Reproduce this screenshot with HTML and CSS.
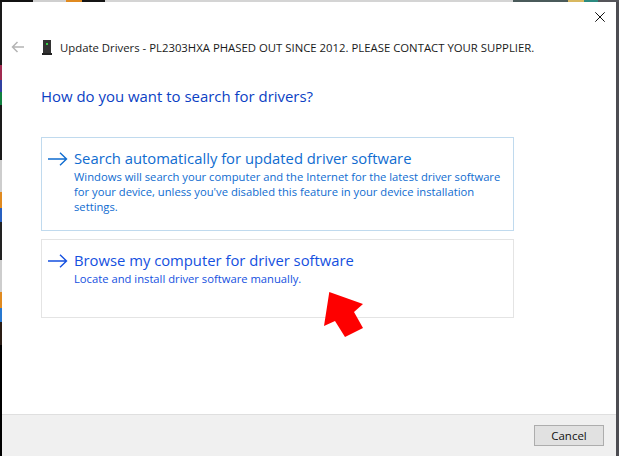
FILE: index.html
```html
<!DOCTYPE html>
<html lang="en">
<head>
<meta charset="utf-8">
<title>Update Drivers</title>
<link rel="stylesheet" href="styles.css">
</head>
<body>
<div class="desktop">
  <div class="window">
    <div class="titlebar">
      <button class="close" aria-label="Close">
        <svg width="10" height="10" viewBox="0 0 10 10"><path d="M.3.300l9.400 9.400M9.700.300l-9.400 9.400" fill="none" stroke="#111" stroke-width="1"/></svg>
      </button>
    </div>
    <div class="nav">
      <svg class="back" width="14" height="12" viewBox="0 0 14 12"><path d="M13 6H1.500M6.500 1L1.500 6l5 5" fill="none" stroke="#b4b4b4" stroke-width="1.500"/></svg>
      <svg class="device" width="10" height="15" viewBox="0 0 10 15"><path d="M1 0h8v13H1z" fill="#333"/><path d="M0 13h10v2H0z" fill="#222"/><path d="M4 3h2v2H4z" fill="#35d045"/></svg>
      <span class="nav-title">Update Drivers - PL2303HXA PHASED OUT SINCE 2012. PLEASE CONTACT YOUR SUPPLIER.</span>
    </div>
    <main class="content">
      <h1 class="heading">How do you want to search for drivers?</h1>
      <div class="option option-hover">
        <svg class="option-arrow" width="20" height="14" viewBox="0 0 20 14"><path d="M0 7h18.500M12 .8L18.500 7 12 13.200" fill="none" stroke="#0f6cd0" stroke-width="1.400"/></svg>
        <div class="option-text">
          <div class="option-title">Search automatically for updated driver software</div>
          <div class="option-desc">Windows will search your computer and the Internet for the latest driver software for your device, unless you've disabled this feature in your device installation settings.</div>
        </div>
      </div>
      <div class="option option-plain">
        <svg class="option-arrow" width="20" height="14" viewBox="0 0 20 14"><path d="M0 7h18.500M12 .8L18.500 7 12 13.200" fill="none" stroke="#1450e0" stroke-width="1.400"/></svg>
        <div class="option-text">
          <div class="option-title">Browse my computer for driver software</div>
          <div class="option-desc">Locate and install driver software manually.</div>
        </div>
      </div>
    </main>
    <footer class="footer">
      <button class="cancel">Cancel</button>
    </footer>
    <svg class="pointer" width="40" height="46" viewBox="0 0 40 46"><path d="M5.300 0L39 12l-9 8 9 16-18 9-10-16-11 5z" fill="#fe0000"/></svg>
  </div>
</div>
</body>
</html>
```
FILE: styles.css
```css
html, body {
  margin: 0;
  padding: 0;
  height: 100%;
}
body {
  overflow: hidden;
  font-family: "Open Sans", "Noto Sans", sans-serif;
}
.desktop {
  width: 619px;
  height: 456px;
  box-sizing: border-box;
  padding: 2px 3px 0 2px;
  display: flex;
  background:
    linear-gradient(90deg, #111 0 33px, #cfcfcf 33px 66px, #e08a20 66px 82px, #151515 82px 105px, #d4d4d4 105px 513px, #4a5a5a 513px 568px, #d8b860 568px 584px, #2c8a80 584px 598px, #55555a 598px) top left / 100% 2px no-repeat,
    linear-gradient(180deg, #1a1a1a 0 65px, #a02a50 65px 80px, #3040a0 80px 92px, #108040 92px 105px, #1a1a1a 105px 160px, #cdcdcd 160px 192px, #e08a20 192px 208px, #2860c0 208px 222px, #222 222px 260px, #cdcdcd 260px 292px, #e08a20 292px 308px, #2878d0 308px 322px, #2a1c14 322px 345px, #000 345px) top left / 2px 100% no-repeat,
    #4d4d52;
}
.window {
  position: relative;
  flex: 1;
  display: flex;
  flex-direction: column;
  background: #fff;
}
.titlebar {
  height: 30px;
  display: flex;
  justify-content: flex-end;
}
.close {
  width: 30px;
  height: 30px;
  margin: 0 1px 0 0;
  padding: 0;
  border: 0;
  background: none;
  display: flex;
  justify-content: center;
  align-items: center;
}
.nav {
  height: 30px;
  display: flex;
  align-items: center;
  padding-left: 9px;
}
.back {
  flex: none;
}
.device {
  flex: none;
  margin-left: 17px;
}
.nav-title {
  margin-left: 8px;
  font-size: 11.350px;
  color: #1a1a1a;
  white-space: nowrap;
}
.content {
  flex: 1;
  padding: 23px 102px 0 39px;
}
.heading {
  margin: 0 0 30px;
  height: 22px;
  font-size: 14.950px;
  line-height: 22px;
  font-weight: 400;
  color: #0b3fc4;
}
.option {
  display: flex;
  box-sizing: border-box;
  padding: 10px 7px 0 6px;
  margin-bottom: 8px;
}
.option-hover {
  height: 94px;
  border: 1px solid #c0daee;
  color: #0f6cd0;
}
.option-plain {
  height: 79px;
  border: 1px solid #e4e4e4;
  color: #1450e0;
}
.option-arrow {
  flex: none;
  margin-top: 4px;
}
.option-text {
  margin-left: 6px;
}
.option-title {
  font-size: 14.800px;
  line-height: 21px;
}
.option-desc {
  font-size: 11.230px;
  line-height: 15px;
}
.footer {
  height: 42px;
  box-sizing: border-box;
  background: #f0f0f0;
  border-top: 1px solid #dfdfdf;
  display: flex;
  justify-content: flex-end;
  align-items: center;
  padding: 0 12px 1px 0;
}
.cancel {
  width: 70px;
  height: 21px;
  padding: 0;
  border: 1px solid #adadad;
  background: #e1e1e1;
  font-family: inherit;
  font-size: 11.500px;
  color: #111;
}
.pointer {
  position: absolute;
  left: 322px;
  top: 290px;
}
```
